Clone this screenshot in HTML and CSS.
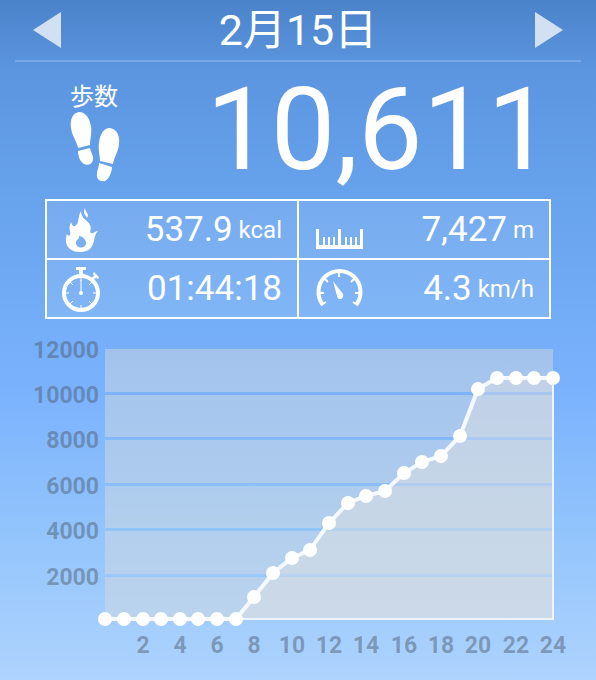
FILE: index.html
```html
<!DOCTYPE html>
<html lang="ja">
<head>
  <meta charset="UTF-8" />
  <meta name="viewport" content="width=device-width, initial-scale=1.0"/>
  <title>歩数計</title>
  <link rel="stylesheet" href="styles.css">
</head>
<body>
  <header class="header">
    <button type="button" class="day-btn" aria-label="前の日">
      <svg width="28" height="36" viewBox="0 0 28 36"><path d="M0 18L28 0V36Z"/></svg>
    </button>
    <h1>2月15日</h1>
    <button type="button" class="day-btn" aria-label="次の日">
      <svg width="28" height="36" viewBox="0 0 28 36"><path d="M28 18L0 0V36Z"/></svg>
    </button>
  </header>

  <main>
    <section class="steps">
      <div class="steps-label">
        <span>歩数</span>
        <svg width="50" height="70" viewBox="0 0 50 70">
          <path d="M9 0C16 0 20 7 21 15C22 22 20 27 20 33L8 36C7 30 2 24 1 16C0 8 2 1 9 0Z"/>
          <path d="M8 39L20 36C21 41 24 44 23 48C22 52 18 54 14 52C10 50 8 44 8 39Z"/>
          <path d="M40 16C47 17 50 24 49 32C48 41 44 45 43 52L30 49C30 43 28 38 29 31C30 23 33 16 40 16Z"/>
          <path d="M29 51L42 55C42 60 39 67 35 69C30 70 26 67 27 62C27 58 29 56 29 51Z"/>
        </svg>
      </div>
      <div class="steps-count">10,611</div>
    </section>

    <section class="stats">
      <div class="stat">
        <svg width="48" height="44" viewBox="-2 0 48 44">
          <path d="M14 44C5 44 0 39 0 33C0 30 0 28 1 26C2 28 3 28 4 27C5 24 2 20 5 14C6 17 7 19 9 18C14 15 11 10 15 3C15 11 22 12 24 17C26 21 23 24 25 25C28 26 29 23 32 23C28 27 29 31 27 36C25 42 20 44 14 44ZM13 28C14 31 10 31 10 35C10 41 20 41 20 35C20 32 17 28 13 28Z" fill-rule="evenodd"/>
          <path d="M19 0C19 4 24 6 21 10C20 7 16 6 19 0Z"/>
        </svg>
        <span class="value">537.9<small> kcal</small></span>
      </div>
      <div class="stat">
        <svg class="ruler" width="48" height="20" viewBox="0 0 48 20">
          <path d="M0 0H3V16H7V8H9V16H12V8H14V16H17V8H19V16H22V0H25V16H29V8H31V16H34V8H36V16H39V8H41V16H44V0H47V20H0Z"/>
        </svg>
        <span class="value">7,427<small> m</small></span>
      </div>
      <div class="stat">
        <svg width="48" height="44" viewBox="2 0 48 44">
          <path d="M14 0H24V3H21V8H17V3H14ZM31 7L32 5L37 10L36 12L34 11L31 13L29 11L32 9Z"/>
          <circle class="line" cx="19" cy="26" r="17" stroke-width="4"/>
          <path class="line" d="M19 10V14M19 38V42M3 26H7M31 26H35M8 15L11 18M27 34L30 37M27 18L30 15M8 37L11 34" stroke-width="1"/>
          <path class="line" d="M19 13V26" stroke-width="1"/>
          <circle cx="19" cy="26" r="2"/>
        </svg>
        <span class="value">01:44:18</span>
      </div>
      <div class="stat">
        <svg width="48" height="44" viewBox="0 0 48 44">
          <path class="line" d="M7 38A21 21 0 1 1 40 38" stroke-width="4"/>
          <path class="line" d="M4 26H8M39 26H43M9 12L12 15M35 15L38 12M23 6V10M5 38L10 35M42 38L37 35" stroke-width="2"/>
          <path d="M17 14L27 27C28 33 22 34 21 29Z"/>
        </svg>
        <span class="value">4.3<small> km/h</small></span>
      </div>
    </section>

    <svg class="chart" viewBox="0 0 596 350" role="img" aria-label="歩数グラフ">
      <!-- bands between the grid lines -->
      <path class="band" d="M105 19H553V62H105ZM105 65H553V107H105ZM105 110H553V153H105ZM105 156H553V198H105ZM105 201H553V244H105ZM105 247H553V290H105Z"/>
      <path class="area" d="M236 289L254 267L273 243L292 228L310 220L329 193L348 173L366 166L385 161L404 143L422 132L441 126L460 106L478 59L497 48H553V289Z"/>
      <path class="frame" d="M236 289H553V48"/>
      <polyline class="series" points="105,289 236,289 254,267 273,243 292,228 310,220 329,193 348,173 366,166 385,161 404,143 422,132 441,126 460,106 478,59 497,48 553,48"/>
      <g class="dots">
        <circle cx="105" cy="289" r="7"/>
        <circle cx="124" cy="289" r="7"/>
        <circle cx="143" cy="289" r="7"/>
        <circle cx="161" cy="289" r="7"/>
        <circle cx="180" cy="289" r="7"/>
        <circle cx="198" cy="289" r="7"/>
        <circle cx="217" cy="289" r="7"/>
        <circle cx="236" cy="289" r="7"/>
        <circle cx="254" cy="267" r="7"/>
        <circle cx="273" cy="243" r="7"/>
        <circle cx="292" cy="228" r="7"/>
        <circle cx="310" cy="220" r="7"/>
        <circle cx="329" cy="193" r="7"/>
        <circle cx="348" cy="173" r="7"/>
        <circle cx="366" cy="166" r="7"/>
        <circle cx="385" cy="161" r="7"/>
        <circle cx="404" cy="143" r="7"/>
        <circle cx="422" cy="132" r="7"/>
        <circle cx="441" cy="126" r="7"/>
        <circle cx="460" cy="106" r="7"/>
        <circle cx="478" cy="59" r="7"/>
        <circle cx="497" cy="48" r="7"/>
        <circle cx="516" cy="48" r="7"/>
        <circle cx="534" cy="48" r="7"/>
        <circle cx="553" cy="48" r="7"/>
      </g>
      <g class="axis-y">
        <text x="99" y="28">12000</text>
        <text x="99" y="73">10000</text>
        <text x="99" y="118">8000</text>
        <text x="99" y="164">6000</text>
        <text x="99" y="209">4000</text>
        <text x="99" y="255">2000</text>
      </g>
      <g class="axis-x">
        <text x="143" y="323">2</text>
        <text x="180" y="323">4</text>
        <text x="217" y="323">6</text>
        <text x="254" y="323">8</text>
        <text x="292" y="323">10</text>
        <text x="329" y="323">12</text>
        <text x="366" y="323">14</text>
        <text x="404" y="323">16</text>
        <text x="441" y="323">18</text>
        <text x="478" y="323">20</text>
        <text x="516" y="323">22</text>
        <text x="553" y="323">24</text>
      </g>
    </svg>
  </main>
</body>
</html>
```
FILE: styles.css
```css
* {
  box-sizing: border-box;
}

body {
  margin: 0;
  min-height: 100vh;
  font-family: Roboto, "Noto Sans CJK JP", sans-serif;
  color: white;
  background: linear-gradient(#4a83c9 0%, #5b95df 10%, #68a3ee 30%, #7ab2fd 57%, #92c4fc 78%, #aed3fd 100%);
}

svg {
  display: block;
  fill: white;
}

.header {
  display: flex;
  justify-content: space-between;
  align-items: center;
  height: 62px;
  margin: 0 15px;
  padding: 0 18px;
  border-bottom: 2px solid #76a9ea;
}

.header h1 {
  margin: 0;
  font-size: 43px;
  line-height: 60px;
  font-weight: 400;
}

.day-btn {
  padding: 0;
  border: none;
  background: none;
  cursor: pointer;
}

.day-btn svg {
  fill: #d2e0f4;
}

.steps {
  display: flex;
  justify-content: space-between;
  height: 137px;
  padding: 0 44px 0 70px;
}

.steps-label {
  padding-top: 20px;
  font-size: 24px;
  line-height: 30px;
}

.steps-count {
  font-size: 115px;
  line-height: 136px;
}

.stats {
  display: grid;
  grid-template-columns: 1fr 1fr;
  gap: 2px;
  margin: 0 45px;
  border: 2px solid white;
  background: linear-gradient(white, white) center / 2px 100% no-repeat,
    linear-gradient(white, white) center / 100% 2px no-repeat,
    linear-gradient(#76abef, #80b5f6);
}

.stat {
  display: flex;
  justify-content: space-between;
  align-items: center;
  height: 57px;
  padding: 0 15px 0 17px;
}

.stat svg {
  overflow: visible;
}

.stat .ruler {
  margin-top: 18px;
}

.value {
  font-size: 35px;
  line-height: 44px;
}

.value small {
  font-size: 24px;
  vertical-align: 3px;
}

.line {
  fill: none;
  stroke: white;
}

.chart {
  width: 100%;
  margin-top: 11px;
}

.chart .band {
  fill: rgba(214, 218, 222, 0.47);
}

.chart .area {
  fill: rgba(228, 226, 223, 0.42);
}

.chart .frame {
  fill: none;
  stroke: #eef4fb;
  stroke-width: 2px;
}

.chart .series {
  fill: none;
  stroke: #f4f9ff;
  stroke-width: 4px;
}

.chart text {
  font-size: 23px;
  font-weight: 700;
  fill: rgba(76, 90, 108, 0.48);
}

.axis-y {
  text-anchor: end;
}

.axis-x {
  text-anchor: middle;
}
```
